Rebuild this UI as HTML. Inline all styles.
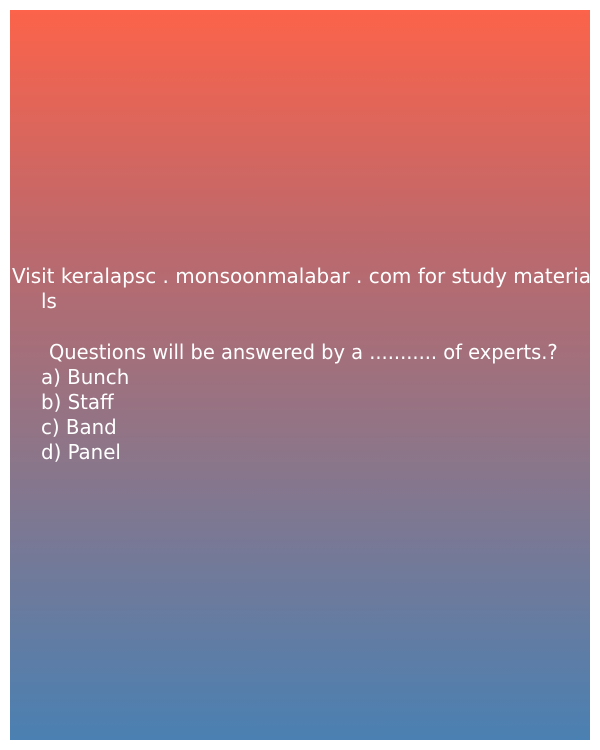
<!DOCTYPE html>
<html><head><meta charset="utf-8"><style>
html,body{margin:0;padding:0;width:600px;height:750px;background:#fff;overflow:hidden}
.box{position:absolute;left:10px;top:10px;width:580px;height:730px;background:linear-gradient(to bottom,#fc634a 0%,#c0686a 30%,#8e7588 60%,#4a80b2 100%)}
.l{position:absolute;white-space:nowrap;color:#fff;font-family:"DejaVu Sans Condensed","DejaVu Sans","Liberation Sans",sans-serif;font-stretch:condensed;font-size:20px;line-height:25px;transform:scaleX(1.1);transform-origin:0 0}
</style></head><body>
<div class="box"></div>
<div class="l" style="left:12px;top:264px;transform:scaleX(1.11)">Visit keralapsc . monsoonmalabar . com for study materia</div>
<div class="l" style="left:41px;top:289px">ls</div>
<div class="l" style="left:49px;top:340px;transform:scaleX(1.08)">Questions will be answered by a ........... of experts.?</div>
<div class="l" style="left:41px;top:365px">a) Bunch</div>
<div class="l" style="left:41px;top:390px">b) Staff</div>
<div class="l" style="left:41px;top:415px">c) Band</div>
<div class="l" style="left:41px;top:440px">d) Panel</div>
</body></html>
